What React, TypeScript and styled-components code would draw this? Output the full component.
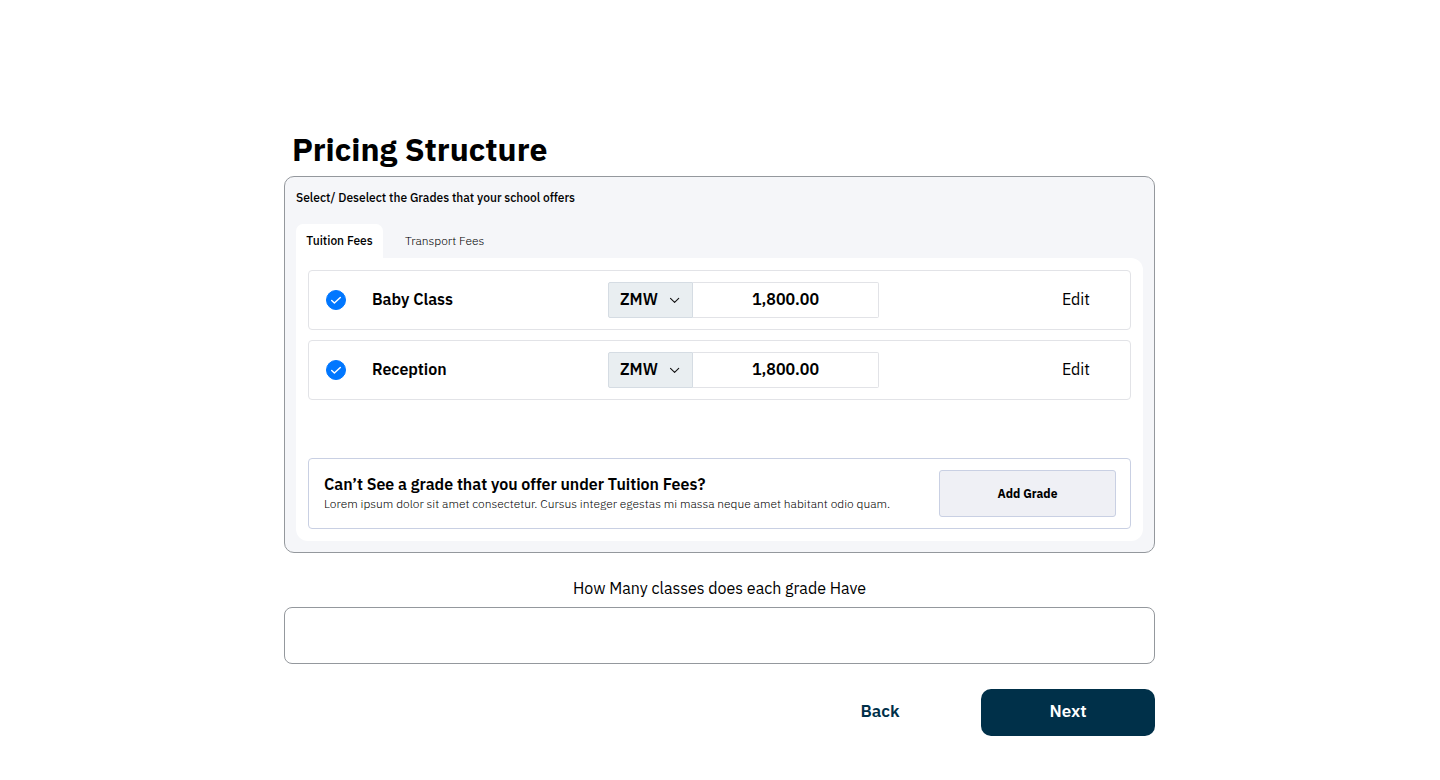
import React, { useState } from "react";
import styled, { createGlobalStyle } from "styled-components";

const GlobalStyle = createGlobalStyle`
  *, *::before, *::after { box-sizing: border-box; }
  body {
    margin: 0;
    background: #fff;
    color: #000;
    font-family: "IBM Plex Sans", Roboto, sans-serif;
    font-size: 16px;
    line-height: 24px;
  }
  button, input, select { font: inherit; color: inherit; }
  button { cursor: pointer; }
`;

const Page = styled.main`
  max-width: 872px;
  margin: 0 auto;
  padding: 129px 1px 44px 0;
`;

const Title = styled.h1`
  margin: 0 0 7px;
  padding-left: 8px;
  font-size: 32px;
  line-height: 40px;
  font-weight: 700;
`;

const Card = styled.section`
  padding: 12px 11px 11px;
  border: 1px solid #94989d;
  border-radius: 10px;
  background: #f5f6f9;
`;

const Hint = styled.p`
  margin: 0 0 17px;
  font-size: 12px;
  line-height: 18px;
  font-weight: 500;
`;

const Tabs = styled.div`
  display: flex;
  gap: 12px;
`;

const Tab = styled.button<{ $active: boolean }>`
  min-width: 87px;
  height: 34px;
  padding: 0 10px;
  border: 0;
  border-radius: 7px 7px 0 0;
  background: ${(p) => (p.$active ? "#fff" : "transparent")};
  color: #000;
  font-size: 12px;
  line-height: 18px;
  font-weight: ${(p) => (p.$active ? 500 : 300)};
`;

const Panel = styled.div`
  display: flex;
  flex-direction: column;
  gap: 10px;
  padding: 12px;
  border-radius: 0 12px 12px 12px;
  background: #fff;
`;

const GradeRow = styled.div`
  display: grid;
  grid-template-columns: 20px 210px 271px 1fr;
  column-gap: 26px;
  align-items: center;
  height: 60px;
  padding: 0 30px 0 17px;
  border: 1px solid #e2e3e7;
  border-radius: 4px;
`;

const CheckWrap = styled.span`
  display: grid;
  width: 20px;
  height: 20px;
  > * { grid-area: 1 / 1; }
  svg { pointer-events: none; }
`;

const Check = styled.input`
  appearance: none;
  width: 20px;
  height: 20px;
  margin: 0;
  border: 1px solid #94989d;
  border-radius: 50%;
  &:checked { background: #0077ff; border-color: #0077ff; }
`;

const GradeName = styled.label`
  padding-bottom: 2px;
  font-weight: 600;
`;

const Price = styled.div`
  display: flex;
  height: 36px;
`;

const CurrencyWrap = styled.div`
  display: grid;
  grid-template-columns: 1fr 24px;
  align-items: center;
  width: 85px;
  svg { grid-area: 1 / 2; pointer-events: none; }
`;

const Currency = styled.select`
  grid-area: 1 / 1 / 2 / 3;
  appearance: none;
  height: 36px;
  padding: 0 11px 2px;
  border: 1px solid #d5dce3;
  border-radius: 2px 0 0 2px;
  background: #e9eef1;
  font-weight: 600;
`;

const Amount = styled.input`
  flex: 1;
  min-width: 0;
  padding: 0 0 2px;
  border: 1px solid #e2e3e7;
  border-left: 0;
  border-radius: 0 2px 2px 0;
  background: #fff;
  text-align: center;
  font-weight: 600;
`;

const EditButton = styled.button`
  justify-self: end;
  padding: 0 10px 2px;
  border: 0;
  background: none;
`;

const MissingGrade = styled.div`
  display: flex;
  align-items: center;
  justify-content: space-between;
  gap: 16px;
  height: 71px;
  margin-top: 48px;
  padding: 0 14px 0 15px;
  border: 1px solid #c9d0e3;
  border-radius: 4px;
`;

const MissingInfo = styled.div`
  padding-bottom: 2px;
`;

const MissingTitle = styled.h2`
  margin: 0;
  font-size: 16px;
  line-height: 22px;
  font-weight: 600;
`;

const MissingText = styled.p`
  margin: 0;
  font-size: 12px;
  line-height: 18px;
  font-weight: 300;
`;

const AddButton = styled.button`
  width: 177px;
  height: 47px;
  border: 1px solid #c9d0e3;
  border-radius: 3px;
  background: #eff0f5;
  font-size: 12px;
  font-weight: 700;
`;

const ClassesLabel = styled.label`
  display: block;
  margin: 23px 0 7px;
  text-align: center;
`;

const ClassesInput = styled.input`
  display: block;
  width: 100%;
  height: 57px;
  padding: 0 16px;
  border: 1px solid #94989d;
  border-radius: 8px;
  background: #fff;
`;

const Actions = styled.div`
  display: flex;
  justify-content: flex-end;
  gap: 14px;
  margin-top: 25px;
`;

const ActionButton = styled.button<{ $primary?: boolean }>`
  width: 174px;
  height: 47px;
  padding: 0 0 3px;
  border: 0;
  border-radius: 10px;
  background: ${(p) => (p.$primary ? "#003049" : "transparent")};
  color: ${(p) => (p.$primary ? "#fff" : "#003049")};
  font-size: 17px;
  font-weight: 600;
`;

const grades = [
  { id: "baby", name: "Baby Class" },
  { id: "reception", name: "Reception" },
];

const tabs = ["Tuition Fees", "Transport Fees"];

function Grade({ id, name }: { id: string; name: string }) {
  return (
    <GradeRow>
      <CheckWrap>
        <Check type="checkbox" id={id} defaultChecked />
        <svg width="20" height="20" viewBox="0 0 20 20" fill="none" stroke="#fff" strokeWidth="1.4" strokeLinecap="round" strokeLinejoin="round" aria-hidden="true">
          <path d="M5.7 10.4 8.4 13 14.3 7.4" />
        </svg>
      </CheckWrap>
      <GradeName htmlFor={id}>{name}</GradeName>
      <Price>
        <CurrencyWrap>
          <Currency aria-label={`${name} currency`} defaultValue="ZMW">
            <option>ZMW</option>
            <option>USD</option>
          </Currency>
          <svg width="12" height="12" viewBox="0 0 12 12" fill="none" stroke="#111" strokeWidth="1.1" strokeLinecap="round" strokeLinejoin="round" aria-hidden="true">
            <path d="M1.5 4.3 5.6 8.3 9.7 4.3" />
          </svg>
        </CurrencyWrap>
        <Amount type="text" aria-label={`${name} fee`} defaultValue="1,800.00" />
      </Price>
      <EditButton type="button">Edit</EditButton>
    </GradeRow>
  );
}

export default function App() {
  const [active, setActive] = useState(tabs[0]);
  return (
    <>
      <GlobalStyle />
      <Page>
        <Title>Pricing Structure</Title>
        <Card>
          <Hint>Select/ Deselect the Grades that your school offers</Hint>
          <Tabs role="tablist">
            {tabs.map((tab) => (
              <Tab key={tab} type="button" role="tab" aria-selected={tab === active} $active={tab === active} onClick={() => setActive(tab)}>
                {tab}
              </Tab>
            ))}
          </Tabs>
          <Panel role="tabpanel">
            {grades.map((grade) => (
              <Grade key={grade.id} {...grade} />
            ))}
            <MissingGrade>
              <MissingInfo>
                <MissingTitle>Can’t See a grade that you offer under Tuition Fees?</MissingTitle>
                <MissingText>
                  Lorem ipsum dolor sit amet consectetur. Cursus integer egestas mi massa neque amet habitant odio quam.
                </MissingText>
              </MissingInfo>
              <AddButton type="button">Add Grade</AddButton>
            </MissingGrade>
          </Panel>
        </Card>
        <ClassesLabel htmlFor="classes">How Many classes does each grade Have</ClassesLabel>
        <ClassesInput id="classes" type="text" />
        <Actions>
          <ActionButton type="button">Back</ActionButton>
          <ActionButton type="button" $primary>Next</ActionButton>
        </Actions>
      </Page>
    </>
  );
}
